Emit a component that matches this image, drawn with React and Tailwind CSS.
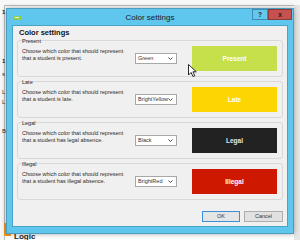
import React from "react";

const groups = [
  { label: "Present", line2: "that a student is present.", value: "Green", color: "bg-[#c5e04a]", text: "text-white", name: "Present" },
  { label: "Late", line2: "that a student is late.", value: "BrightYellow", color: "bg-[#fdd500]", text: "text-white", name: "Late" },
  { label: "Legal", line2: "that a student has legal absence.", value: "Black", color: "bg-[#222222]", text: "text-[#e8e8e8]", name: "Legal" },
  { label: "Illegal", line2: "that a student has illegal absence.", value: "BrightRed", color: "bg-[#cf1800]", text: "text-white", name: "Illegal" },
];

function Group({ g }) {
  return (
    <div className="flex h-[37px] items-center rounded-[3px] border border-[#d9d9d9] pl-[4px]">
      <div className="-mt-[3px] flex w-[113px] flex-col self-start text-[5.5px] leading-[7.5px] text-[#2a2a2a]">
        <div>{g.label}</div>
        <div className="mt-[2px]">Choose which color that should represent</div>
        <div>{g.line2}</div>
      </div>
      <div className="flex h-[11px] w-[42px] items-center justify-between border border-[#a8a8a8] bg-white pl-[2px] pr-[3px] text-[5.5px] text-[#333]">
        <span>{g.value}</span>
        <svg width="5" height="3" viewBox="0 0 5 3">
          <path d="M0.5 0.5 L2.5 2.5 L4.5 0.5" fill="none" stroke="#444" strokeWidth="1" />
        </svg>
      </div>
      <div className={`ml-[15px] flex h-[25px] w-[85px] items-center justify-center ${g.color} ${g.text} text-[6.5px] font-bold`}>
        {g.name}
      </div>
    </div>
  );
}

export default function App() {
  return (
    <div className="relative h-[240px] w-[300px] overflow-hidden bg-[#f8f8f8] font-['Liberation_Sans',Arial,sans-serif]">
      {/* background window behind */}
      <div className="absolute left-[4px] top-[5px] h-[240px] w-[300px] border-l border-t border-[#bdbdbd] bg-white" />
      <div className="absolute right-0 top-[5px] h-[235px] w-[6px] bg-[#e6e6e6]" />
      <div className="absolute left-[2px] top-[9px] text-[6px] font-bold leading-[6px] text-[#222]">1</div>
      <div className="absolute left-[2px] top-[58px] text-[6px] font-bold leading-[6px] text-[#222]">1</div>
      <div className="absolute left-[2px] top-[71px] text-[6px] leading-[6px] text-[#333]">s</div>
      <div className="absolute left-[2px] top-[89px] text-[6px] leading-[6px] text-[#333]">L</div>
      <div className="absolute left-[2px] top-[99px] text-[6px] leading-[6px] text-[#333]">L</div>
      <div className="absolute left-[2px] top-[128px] text-[6px] leading-[6px] text-[#333]">B</div>
      <div className="absolute left-[4px] top-[223px] h-[13px] w-[7px] border-b-[3px] border-l-[3px] border-[#f39a1e]" />
      <div className="absolute left-[14px] top-[233px] text-[8px] font-bold leading-[8px] text-[#222]">Logic</div>

      {/* dialog window */}
      <div className="absolute left-[6px] top-[8px] flex h-[226px] w-[288px] flex-col border border-[#4d9bbd] bg-[#5fc6ee] shadow-[0_0_5px_rgba(0,0,0,0.35)]">
        {/* title bar */}
        <div className="grid h-[16px] grid-cols-[1fr_auto_1fr]">
          <div className="flex items-center pl-[6px] pt-[1px]">
            <div className="flex h-[4px] w-[8px] items-center justify-center bg-[#8ccf4f]">
              <div className="h-[1px] w-[4px] bg-[#e7f7d6]" />
            </div>
          </div>
          <div className="flex items-center pt-[1px] text-[8px] text-[#1b1b1b]">Color settings</div>
          <div className="flex justify-end pr-[1px]">
            <div className="flex h-[11px] w-[16px] items-center justify-center border border-[#3b8db4] bg-[#64c8ee] text-[6.5px] font-bold text-[#1a1a1a]">?</div>
            <div className="flex h-[11px] w-[24px] items-center justify-center border border-[#8b3a3a] bg-[#c75050] text-[6.5px] font-bold text-[#1a1a1a]">x</div>
          </div>
        </div>
        {/* client area */}
        <div className="mx-[5px] flex h-[202px] flex-col border border-[#4aa2c8] bg-[#f0f0f0] px-[4px] pt-[3px]">
          <div className="ml-[2px] text-[7.5px] font-bold leading-[8px] text-[#111]">Color settings</div>
          <div className="mt-[3px] flex flex-col gap-[4px]">
            {groups.map((g) => (
              <Group key={g.name} g={g} />
            ))}
          </div>
          <div className="mt-[11px] flex justify-end gap-[4px]">
            <div className="flex h-[11px] w-[38px] items-center justify-center border border-[#3c8fd6] bg-[#e5e5e5] text-[5.5px] text-[#333]">OK</div>
            <div className="flex h-[11px] w-[39px] items-center justify-center border border-[#adadad] bg-[#e1e1e1] text-[5.5px] text-[#333]">Cancel</div>
          </div>
        </div>
      </div>

      {/* mouse cursor */}
      <svg className="absolute left-[188px] top-[64px]" width="10" height="14" viewBox="0 0 10 14">
        <path d="M0.5 0.5 L0.5 11 L3 8.5 L5 12.5 L6.8 11.7 L4.9 7.8 L8.3 7.8 Z" fill="white" stroke="#111" strokeWidth="0.9" />
      </svg>
    </div>
  );
}
